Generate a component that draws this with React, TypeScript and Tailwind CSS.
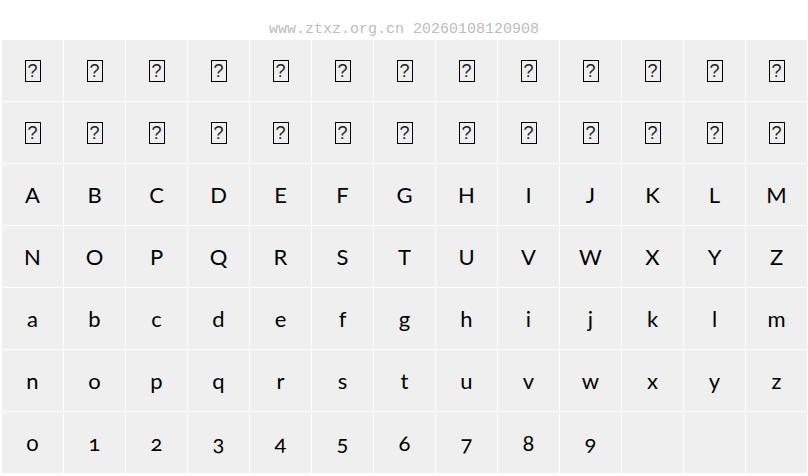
import React from "react";

const upper = "ABCDEFGHIJKLMNOPQRSTUVWXYZ".split("");
const lower = "abcdefghijklmnopqrstuvwxyz".split("");
const digits = "0123456789".split("");

// 字体预览：前两行是缺字的方框
const cells: (string | null)[] = [
  ...Array(26).fill("?box"),
  ...upper,
  ...lower,
  ...digits,
  null,
  null,
  null,
];

function Tofu() {
  return (
    <span className="inline-flex items-center justify-center w-[16px] h-[22px] border border-black text-[18px] leading-none text-[#222] font-['Liberation_Sans',sans-serif]">
      ?
    </span>
  );
}

export default function App() {
  return (
    <div className="w-[808px] h-[476px] bg-white overflow-hidden">
      <div className="h-10 pt-[22px] text-center text-[15px] leading-[15px] text-[#bdbdbd] font-['Liberation_Mono',monospace]">
        www.ztxz.org.cn 20260108120908
      </div>
      <div className="grid grid-cols-[repeat(13,61px)] auto-rows-[61px] gap-px pl-[2px]">
        {cells.map((c, i) => (
          <div
            key={i}
            className="flex items-center justify-center bg-[#efefef] text-[22px] text-black font-['Lato',sans-serif] oldstyle-nums"
          >
            {c === "?box" ? <Tofu /> : c}
          </div>
        ))}
      </div>
    </div>
  );
}
